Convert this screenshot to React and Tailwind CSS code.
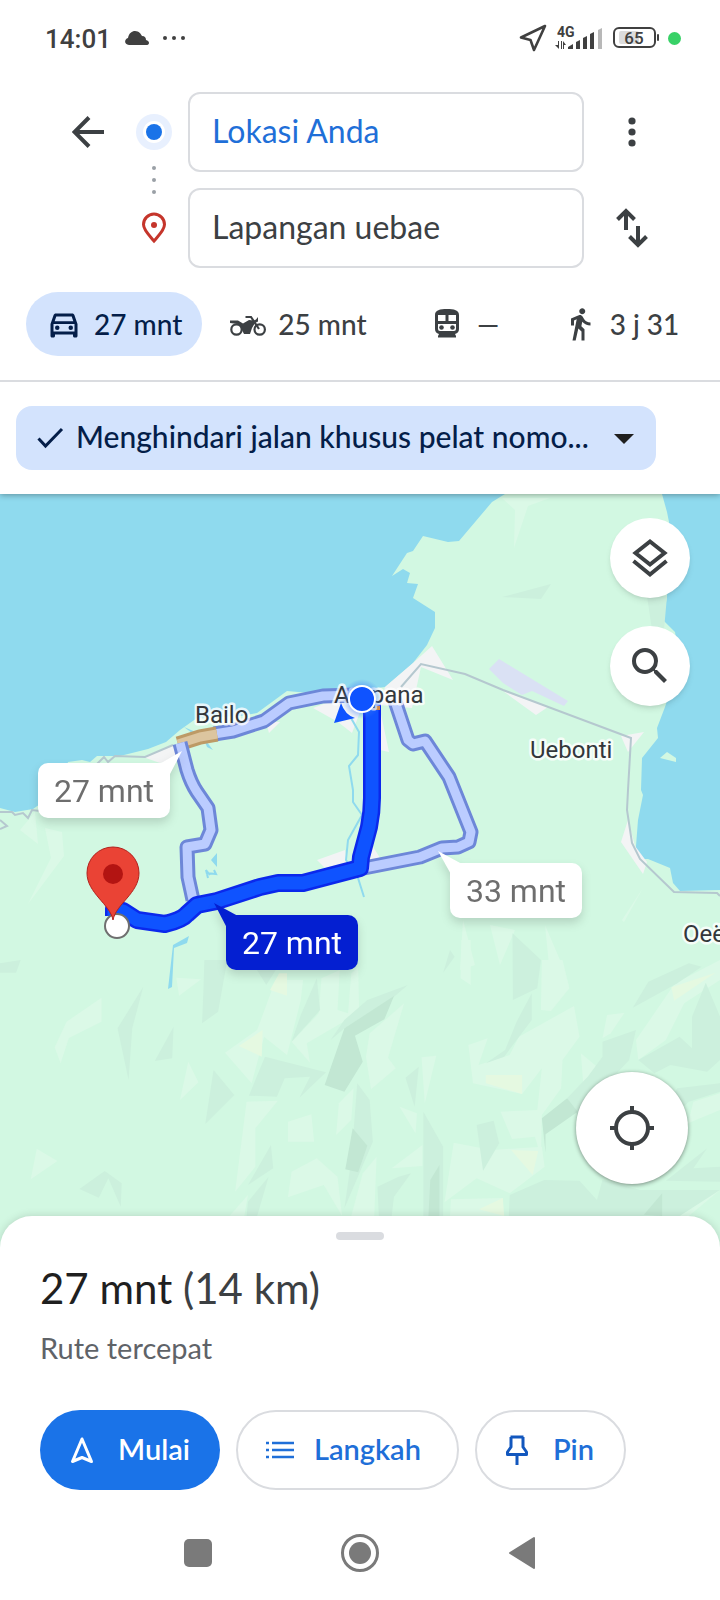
import { useState } from "react";
import {
  MdOutlineDirectionsCar,
  MdDirectionsWalk,
  MdSearch,
} from "react-icons/md";

const activeRoute =
  "M372 704 L372 798 Q372 812 369 827 L361 857 L360 868 L303 883 L278 883 L260 887 L217 901 L197 905 L187 914 Q182 920 165 924 L137 920 L123 911 L114 909 L114 916";
const northRoute = "M355 695 L323 696 L289 703 L264 721 L233 731 L214 734";
const slowSegment = "M217 734 L200 737 L178 744";
const westRoute =
  "M180 743 L187 770 Q191 783 197 792 L208 808 L211 830 L205 844 L187 847 L188 877 L193 900";
const eastRoute =
  "M394 698 L408 740 L413 744 L425 741 L449 777 L471 832 L469 842 L458 847 L442 848 L420 857 L364 868";

// Relief facets of the hills south of the coast road
const relief = {
  light: [
    "221,113 145,185 119,262 132,310 150,234 221,185",
    "410,305 432,367 392,420",
    "384,53 438,58 390,107",
    "80,566 125,603 67,658",
    "600,60 560,210 490,278 548,370 575,230 625,285 655,120 660,60",
    "700,55 694,160 635,245 675,308 668,250 755,180 782,150 780,20 765,40 758,160 735,150 740,30",
    "880,130 805,220 797,290 808,388 862,325 845,293",
    "537,425 605,422 556,505 556,620 512,695",
    "627,485 678,463 684,545 627,545",
    "770,385 765,480 732,525 738,430",
    "690,595 735,650 745,768 705,675 627,712 635,635",
    "820,590 815,768 765,768 790,640",
    "918,292 950,287 925,430",
    "870,440 908,460 905,520",
    "853,625 920,555 920,618",
    "1005,-60 1025,-60 1025,75 1003,55",
    "1180,0 1225,0 1240,85 1200,153 1178,150",
    "1250,138 1262,230 1225,300 1222,385 1180,465 1178,590 1165,530 1115,537 1090,455 1170,450 1180,325 1137,402 1030,370 1020,255 1062,235 1042,315 1110,285 1130,230",
    "988,548 1070,570 1180,560 1186,620 1110,700 1038,655 968,727",
    "982,718 1095,714 1095,768 980,768",
    "1322,165 1360,158 1330,220 1312,235",
    "1470,70 1568,0 1568,60 1490,130 1450,240 1390,300 1385,240 1425,160",
    "1265,280 1300,320 1270,370",
    "1568,400 1510,425 1498,490 1568,450",
    "1568,690 1500,768 1450,768 1520,700",
    "500,768 540,705 532,768",
  ],
  dark: [
    "0,10 45,0 35,38 0,38",
    "312,80 256,205 280,360 288,205",
    "378,200 337,303 375,295",
    "445,0 495,0 475,155 440,190 443,90",
    "465,330 510,405 447,492",
    "228,633 265,670 263,740 236,655 215,713 173,687",
    "555,20 605,20 580,75",
    "577,290 710,337 652,413 675,350 620,355 603,410 542,407",
    "690,55 697,150 635,245 655,165",
    "888,75 858,110 750,205 720,240 750,180 800,120",
    "778,370 805,420 812,545 750,745 765,600",
    "590,555 595,625 540,675",
    "585,650 560,768 537,768 540,725",
    "868,650 895,640 858,710 853,768 825,768 822,680",
    "912,320 903,440 883,353",
    "922,455 965,560 965,768 922,768",
    "1116,-80 1178,0 1170,85 1117,120",
    "1158,100 1158,180 1098,290 1058,310 1100,270 1125,185",
    "1038,495 1075,482 1087,550 1052,632",
    "1500,10 1528,20 1475,70 1378,143 1412,65",
    "1385,210 1370,300 1258,465 1235,415 1280,350 1312,290 1312,245",
    "1537,68 1568,170 1568,300 1540,335 1460,315 1425,340 1390,300 1480,230 1507,265 1507,170",
    "1110,705 1185,660 1262,662 1300,720 1312,660 1395,690 1568,690 1480,768 1108,768",
    "1475,385 1568,370 1568,395 1500,425 1460,480 1435,470",
    "1540,565 1510,625 1568,620 1568,665 1450,662",
    "980,-30 990,-10 965,38",
  ],
  deep: [
    "858,108 837,178 773,227 790,305 750,395 707,375 750,205",
    "768,505 800,557 780,637 752,628",
    "1235,415 1258,455 1188,523 1188,578 1180,475",
    "957,615 957,768 933,768 937,660",
    "1442,700 1442,768 1402,764",
  ],
  warm: [
    "608,40 625,40 625,107 588,90",
    "572,210 570,290 520,258",
    "1058,345 1137,345 1137,402 1058,370",
    "1113,570 1172,573 1160,645",
    "1095,714 1098,768 1043,748",
    "1558,38 1462,82 1468,122",
  ],
};

const reliefColors = { light: "#dbf9e7", dark: "#ccf0dd", deep: "#c2e7d3", warm: "#e5f9e1" };

function Route({ d, edge, fill, wide, inner }) {
  return (
    <g fill="none" strokeLinejoin="round">
      <path d={d} stroke={edge} strokeWidth={wide} />
      <path d={d} stroke={fill} strokeWidth={inner} />
    </g>
  );
}

function PlaceName({ x, y, children }) {
  return (
    <text
      x={x}
      y={y}
      fontSize="24"
      fill="#33373b"
      stroke="#ffffff"
      strokeOpacity="0.8"
      strokeWidth="5"
      strokeLinejoin="round"
      paintOrder="stroke"
    >
      {children}
    </text>
  );
}

function TimeBubble({ x, y, tail, text, active }) {
  return (
    <g filter="url(#bubbleShadow)">
      <path d={tail} fill={active ? "#041fd1" : "#ffffff"} />
      <rect x={x} y={y} width="132" height="55" rx="10" fill={active ? "#041fd1" : "#ffffff"} />
      <text x={x + 66} y={y + 39} textAnchor="middle" fontSize="32" fill={active ? "#ffffff" : "#6e6e6e"}>
        {text}
      </text>
    </g>
  );
}

function RouteMap() {
  return (
    <svg
      viewBox="0 494 720 754"
      preserveAspectRatio="xMidYMin slice"
      className="absolute inset-0 h-full w-full font-[Roboto,sans-serif]"
      role="img"
      aria-label="Peta rute"
    >
      <defs>
        <filter id="bubbleShadow" x="-20%" y="-20%" width="140%" height="160%" colorInterpolationFilters="sRGB">
          <feDropShadow dx="0" dy="5" stdDeviation="5" floodColor="#000" floodOpacity="0.14" />
        </filter>
        <radialGradient id="halo">
          <stop offset="0.6" stopColor="#3f7cf5" stopOpacity="0.5" />
          <stop offset="1" stopColor="#3f7cf5" stopOpacity="0" />
        </radialGradient>
      </defs>

      <rect y="494" width="720" height="754" fill="#8fdaee" />
      <path
        fill="#d2f8e2"
        d="M0 808 L15 812 L33 809 L60 790 L68 762 L82 760 L90 762 L97 756 L120 756 L148 749 L166 742 L180 730 L197 718 L240 716 L257 713 L287 691 L320 694 L345 692 L385 687 L413 663 L427 645 L435 628 L435 612 L413 598 L418 584 L407 583 L410 573 L403 569 L392 576 L407 553 L413 551 L423 536 L448 542 L459 541 L492 502 L505 494 L662 494 L667 512 L669 522 L667 597 L663 620 L675 632 L680 660 L665 707 L657 728 L658 738 L642 758 L641 790 L643 795 L638 820 L635 859 L648 859 L670 868 L673 883 L680 891 L720 890 L720 1248 L0 1248 Z"
      />
      <path fill="#d2f8e2" d="M660 758 L667 752 L676 758 L676 762 Z" />

      <path fill="#dbf9e7" d="M502 498 L550 498 L528 506 L514 548 L515 510 Z M20 830 L35 812 L38 844 Z M45 828 L62 832 L64 856 L28 904 L51 858 Z M643 888 L622 920 L624 922 Z" />
      <path fill="#ccf0dd" d="M502 597 L551 584 L541 599 Z M647 596 L667 596 L664 630 L652 630 Z" />
      <path fill="#dbf9e7" d="M463 920 L475 965 L460 970 Z M490 925 L515 930 L500 965 Z M545 925 L560 960 L550 975 Z" />

      <g transform="translate(0 960) scale(0.4592 0.3333)">
        {Object.entries(relief).map(([tone, shapes]) =>
          shapes.map((points) => <polygon key={points} points={points} fill={reliefColors[tone]} />)
        )}
      </g>

      {/* built-up areas */}
      <g fill="#f3f4f5">
        <path d="M432 646 L453 680 L421 667 L412 708 L380 705 L385 687 L413 663 Z" />
        <path d="M503 691 L536 715 L548 707 Z M621 736 L644 732 L628 752 Z" />
        <path d="M628 820 L621 842 L643 874 L647 862 L635 846 Z" />
        <path d="M143 757 L173 745 L180 760 L160 763 Z" />
        <path d="M317 860 L345 850 L347 862 L325 868 Z M378 700 L389 752 L380 750 Z M372 845 L380 858 L370 860 Z" />
        <path d="M313 708 L340 698 L360 712 L352 733 L338 722 Z M266 722 L280 722 L269 733 Z" />
      </g>
      <path fill="#dae1f4" d="M499 659 L489 669 L503 683 L522 695 L532 691 L564 706 L568 701 Z" />

      <g fill="none" stroke="#b5c8cf" strokeWidth="2">
        <path d="M401 687 L421 664 L465 674 L503 690 L631 738 L628 790 L627 810 L632 843 L640 859 L674 892 L717 893 L720 896" />
        <path d="M173 745 L145 757 L115 756 L108 762 L104 757 L97 764 M0 812 L12 812 L15 815 L23 813 L28 818 L32 810 L40 811 M0 820 L7 826 L0 829" />
      </g>

      <g fill="none" stroke="#8fdaee" strokeWidth="2">
        <path d="M351 718 L359 732 L358 755 L349 766 L353 790 L353 802 L362 815 L348 840 L346 860 L358 878 L364 897" />
        <path d="M210 875 L206 870 L208 878 M214 870 L216 874 L206 873" />
      </g>
      <path fill="#8fdaee" d="M217 853 L211 860 L217 867 Z M189 936 L173 945 L168 989 L172 987 L174 948 L187 943 Z M203 737 L213 750 L207 747 Z M184 727 L192 733 L198 733 Z" />

      <Route d={northRoute} edge="#6d87d8" fill="#bbccff" wide={15} inner={9} />
      <Route d={slowSegment} edge="#bd9a66" fill="#dcc59f" wide={15} inner={9} />
      <Route d={westRoute} edge="#6d87d8" fill="#bbccff" wide={15} inner={9} />
      <Route d={eastRoute} edge="#6d87d8" fill="#bbccff" wide={15} inner={9} />
      <Route d={activeRoute} edge="#0b28ec" fill="#0f53ff" wide={18} inner={13} />
      <path d="M372 708 L380 708" stroke="#e08a3c" strokeWidth="4" />

      <PlaceName x={195} y={723}>Bailo</PlaceName>
      <PlaceName x={334} y={703}>Ampana</PlaceName>
      <PlaceName x={530} y={758}>Uebonti</PlaceName>
      <PlaceName x={683} y={942}>Oeë</PlaceName>

      <path d="M341 703 Q345 715 355 718 L334 723 Z" fill="#0f53ff" />
      <circle cx="362" cy="699" r="20" fill="url(#halo)" />
      <circle cx="362" cy="699" r="13" fill="#0f53ff" stroke="#ffffff" strokeWidth="2" />

      <TimeBubble x={38} y={763} tail="M155 765 L163 762 L182 751 L170 774 L168 780 Z" text="27 mnt" />
      <TimeBubble x={450} y={863} tail="M438 851 L462 864 L452 876 Z" text="33 mnt" />
      <TimeBubble x={226} y={915} tail="M214 903 L238 916 L227 928 Z" text="27 mnt" active />

      <circle cx="117" cy="926" r="12" fill="#ffffff" stroke="#6f6f6f" strokeWidth="2" />
      <path
        d="M113 920 C110 904 87 893 87 873 A26 26 0 0 1 139 873 C139 893 116 904 113 920 Z"
        fill="#ea4335"
        stroke="#b3211d"
        strokeWidth="1"
      />
      <circle cx="113" cy="874" r="10" fill="#b31412" />
    </svg>
  );
}

function StatusBar() {
  return (
    <div className="flex h-[76px] items-center justify-between pr-[39px] pl-[45px] font-[Roboto,sans-serif] text-[#404040]">
      <div className="flex items-center gap-3.5">
        <span className="pt-0.5 text-[26px] leading-8 font-medium">14:01</span>
        <svg width="24" height="14" viewBox="0 0 24 14" fill="#404040">
          <path d="M4 14 C-1 14 -1 8 3 7 C4 2 7 0 10 0 C14 0 16 3 17 5 C20 5 21 7 21 9 C25 10 25 14 21 14 Z" />
        </svg>
        <svg width="24" height="6" viewBox="0 0 24 6" fill="#404040">
          <circle cx="2" cy="3" r="2" />
          <circle cx="11" cy="3" r="2" />
          <circle cx="20" cy="3" r="2" />
        </svg>
      </div>
      <div className="flex items-center gap-2">
        <svg width="28" height="28" viewBox="0 0 28 28" fill="none" stroke="#404040" strokeWidth="2.6" strokeLinejoin="round">
          <path d="M26 2 L2 13.500 L11.500 16 L15 26 Z" />
        </svg>
        <svg width="50" height="26" viewBox="0 0 50 26" fill="#404040">
          <text x="2" y="12" fontSize="14" fontWeight="700">4G</text>
          <path d="M4 16 V24 L0 20 H3 V16 Z M6 16 V24 H7 V16 Z M8 16 V24 H9 V20 H11 Z" />
          <path d="M13 24 V22 L18 19 V24 Z M21 24 V17 L25 15 V24 Z M28 24 V13 L32 11 V24 Z M35 24 V9 L39 7 V24 Z" />
          <path d="M43 24 V5 L47 3 V24 Z" fill="#b8b8b8" />
        </svg>
        <svg width="47" height="22" viewBox="0 0 47 22">
          <rect x="1" y="1" width="41" height="19" rx="5" fill="none" stroke="#404040" strokeWidth="2" />
          <rect x="6" y="4" width="20" height="13" rx="2" fill="#dcdcdc" />
          <rect x="44" y="7" width="2" height="7" rx="1" fill="#404040" />
          <text x="21" y="17" textAnchor="middle" fontSize="17" fontWeight="500" fill="#404040">65</text>
        </svg>
        <span className="size-[13px] rounded-full bg-[#38d167]" />
      </div>
    </div>
  );
}

function SearchForm() {
  const [origin, setOrigin] = useState("Lokasi Anda");
  const [destination, setDestination] = useState("Lapangan uebae");
  const field =
    "h-20 w-full min-w-0 rounded-xl border-2 border-[#dadce0] bg-white px-[22px] pb-1 text-[32px] outline-none";

  return (
    <form className="flex px-[72px] pt-4">
      <button type="button" aria-label="Kembali" className="mr-8 flex h-20 w-8 items-center">
        <svg width="32" height="32" viewBox="0 0 32 32" fill="none" stroke="#3c4043" strokeWidth="4">
          <path d="M32 16 H3 M17 1.500 L2.500 16 L17 30.500" />
        </svg>
      </button>
      <svg width="36" height="176" viewBox="0 0 36 176" className="mr-4 shrink-0">
        <circle cx="18" cy="40" r="18" fill="#e8f0fe" />
        <circle cx="18" cy="40" r="11" fill="#fff" />
        <circle cx="18" cy="40" r="8" fill="#1a73e8" />
        <g fill="#9aa0a6">
          <circle cx="18" cy="76" r="2" />
          <circle cx="18" cy="88" r="2" />
          <circle cx="18" cy="100" r="2" />
        </g>
        <path
          d="M18 149 C13 143 7.500 138 7.500 132.500 A10.500 10.500 0 0 1 28.500 132.500 C28.500 138 23 143 18 149 Z"
          fill="none"
          stroke="#c5352b"
          strokeWidth="3"
        />
        <circle cx="18" cy="133" r="3" fill="#c5352b" />
      </svg>
      <div className="flex min-w-0 flex-1 flex-col gap-4">
        <input
          aria-label="Titik awal"
          className={`${field} text-[#1f6fd8]`}
          value={origin}
          onChange={(e) => setOrigin(e.target.value)}
        />
        <input
          aria-label="Tujuan"
          className={`${field} text-[#3c4043]`}
          value={destination}
          onChange={(e) => setDestination(e.target.value)}
        />
      </div>
      <div className="ml-8 flex w-8 flex-col gap-4">
        <button type="button" aria-label="Opsi lainnya" className="flex h-20 items-center justify-center">
          <svg width="8" height="30" viewBox="0 0 8 30" fill="#3c4043">
            <circle cx="4" cy="4" r="3.600" />
            <circle cx="4" cy="15" r="3.600" />
            <circle cx="4" cy="26" r="3.600" />
          </svg>
        </button>
        <button type="button" aria-label="Tukar titik awal dan tujuan" className="flex h-20 items-center justify-center">
          <svg width="32" height="40" viewBox="0 0 32 40" fill="none" stroke="#3c4043" strokeWidth="4">
            <path d="M10 22 V3 M1.500 11.500 L10 3 L18.500 11.500 M22 18 V37 M13.500 28.500 L22 37 L30.500 28.500" />
          </svg>
        </button>
      </div>
    </form>
  );
}

function MotorcycleIcon() {
  return (
    <svg width="36" height="36" viewBox="0 0 36 36" fill="#3c4043">
      <g fill="none" stroke="#3c4043" strokeWidth="2.2">
        <circle cx="6.500" cy="23.500" r="5.200" />
        <circle cx="29.700" cy="23.500" r="5.200" />
        <path d="M15.500 11 H21 L29 23" />
      </g>
      <path d="M0 14.500 H8 L13 17.500 L19 14 L24 14.500 L26 13.500 L28 11 V15.500 L25 17 L22 22 L20 28 H14 L11 22 L8 18 L0 17 Z" />
    </svg>
  );
}

function TransitIcon() {
  return (
    <svg width="36" height="36" viewBox="0 0 36 36">
      <path
        fill="#3c4043"
        fillRule="evenodd"
        d="M6 9 C6 4 11 3 18 3 C25 3 30 4 30 9 V23 Q30 27 26 28 L27 30 V31.500 H9 V30 L10 28 Q6 27 6 23 Z M9 9 V15 H16.500 V9 Z M19.500 9 V15 H27 V9 Z M9 18 V23 Q9 25 11 25 H25 Q27 25 27 23 V18 Z"
      />
      <circle cx="12.500" cy="21.500" r="2.300" fill="#3c4043" />
      <circle cx="23.500" cy="21.500" r="2.300" fill="#3c4043" />
    </svg>
  );
}

const modes = [
  { id: "mobil", icon: <MdOutlineDirectionsCar className="size-9" />, label: "27 mnt" },
  { id: "motor", icon: <MotorcycleIcon />, label: "25 mnt" },
  { id: "transportasi umum", icon: <TransitIcon />, label: "—" },
  { id: "jalan kaki", icon: <MdDirectionsWalk className="size-9" />, label: "3 j 31" },
];

function TravelModes() {
  const [mode, setMode] = useState("mobil");
  return (
    <div className="mt-6 flex gap-2 overflow-hidden border-b-2 border-[#dadce0] pb-6 pl-[26px]">
      {modes.map((m) => (
        <button
          key={m.id}
          type="button"
          aria-label={`${m.id} ${m.label}`}
          aria-pressed={mode === m.id}
          onClick={() => setMode(m.id)}
          className={`flex h-16 min-w-[139px] shrink-0 items-center justify-center gap-3 rounded-full px-5 text-[28px] font-medium whitespace-nowrap ${
            mode === m.id ? "bg-[#d3e3fd] text-[#041e49]" : "text-[#3c4043]"
          }`}
        >
          {m.icon}
          <span>{m.label}</span>
        </button>
      ))}
    </div>
  );
}

function AvoidChip() {
  return (
    <div className="py-6 pr-16 pl-4">
      <label className="flex h-16 items-center gap-2 rounded-2xl bg-[#d3e3fd] pr-3.5 pl-4">
        <svg width="36" height="36" viewBox="0 0 36 36" fill="none" stroke="#041e49" strokeWidth="3" className="shrink-0">
          <path d="M6.500 18.500 L13.500 26 L30 9" />
        </svg>
        <select
          aria-label="Opsi pelat nomor"
          className="min-w-0 flex-1 appearance-none bg-transparent pb-1 text-[30px] font-medium text-[#041e49] outline-none"
        >
          <option>Menghindari jalan khusus pelat nomo...</option>
        </select>
        <svg width="36" height="36" viewBox="0 0 36 36" fill="#1f1f1f" className="shrink-0">
          <path d="M8 14 H28 L18 24 Z" />
        </svg>
      </label>
    </div>
  );
}

function MapArea() {
  const round = "flex items-center justify-center rounded-full bg-white text-[#3c4043]";
  return (
    <section className="relative min-h-[480px] flex-1 overflow-hidden">
      <RouteMap />
      <div className="absolute top-6 right-[30px] flex flex-col gap-7">
        <button type="button" aria-label="Lapisan" className={`${round} size-20 shadow-md`}>
          <svg width="36" height="40" viewBox="0 0 36 40" fill="none" stroke="#3c4043" strokeWidth="4">
            <path d="M18 3.500 L32.500 15 L18 26.500 L3.500 15 Z M1.500 23 L18 36.500 L34.500 23" />
          </svg>
        </button>
        <button type="button" aria-label="Telusuri" className={`${round} size-20 shadow-md`}>
          <MdSearch className="size-12" />
        </button>
      </div>
      <button type="button" aria-label="Lokasi saya" className={`${round} absolute right-8 bottom-16 size-28 shadow-[0_1px_4px_rgba(0,0,0,0.45)]`}>
        <svg width="44" height="44" viewBox="0 0 44 44" fill="none" stroke="#3c4043" strokeWidth="4">
          <circle cx="22" cy="22" r="16" />
          <path d="M22 0 V6 M22 38 V44 M0 22 H6 M38 22 H44" />
        </svg>
      </button>
    </section>
  );
}

function RouteSheet() {
  const outlined = "flex h-20 items-center rounded-full border-2 border-[#dadce0] text-[#1f6fd8]";
  return (
    <section className="relative -mt-8 rounded-t-[32px] bg-white pt-4 shadow-[0_0_8px_rgba(0,0,0,0.15)]">
      <div className="mx-auto h-2 w-12 rounded-full bg-[#dadce0]" />
      <div className="px-10">
        <h1 className="mt-5 text-[42px] leading-[56px] text-[#1f1f1f]">
          27 mnt <span className="text-[#3c4043]">(14 km)</span>
        </h1>
        <p className="mt-3 text-[29px] leading-10 text-[#5f6368]">Rute tercepat</p>
        <div className="mt-[42px] flex gap-4 text-[29px] font-semibold">
          <button type="button" className="flex h-20 items-center gap-6 rounded-full bg-[#1a73e8] px-[30px] text-white">
            <svg width="24" height="30" viewBox="0 0 24 30" fill="none" stroke="currentColor" strokeWidth="3" strokeLinejoin="round">
              <path d="M12 4 L21.500 26.500 L12 22.500 L2.500 26.500 Z" />
            </svg>
            <span className="pb-0.5">Mulai</span>
          </button>
          <button type="button" className={`${outlined} gap-5 pr-9 pl-7`}>
            <svg width="28" height="18" viewBox="0 0 28 18" fill="none" stroke="currentColor" strokeWidth="2.6">
              <path d="M0 2 H3 M6 2 H28 M0 9 H3 M6 9 H28 M0 16 H3 M6 16 H28" />
            </svg>
            <span className="pb-0.5">Langkah</span>
          </button>
          <button type="button" className={`${outlined} gap-6 pr-[30px] pl-7`}>
            <svg width="24" height="32" viewBox="0 0 24 32" fill="none" stroke="#1257be" strokeWidth="3" strokeLinejoin="round">
              <path d="M5.500 3 H18.500 M6 3 V13 L2.500 18 V20.500 H21.500 V18 L18 13 V3 M12 20 V31" />
            </svg>
            <span className="pb-0.5">Pin</span>
          </button>
        </div>
      </div>
      <nav aria-label="Navigasi sistem" className="mt-4 flex h-[94px] items-center justify-center gap-[122px]">
        <button type="button" aria-label="Terbaru" className="flex w-10 justify-center">
          <span className="size-7 rounded-[5px] bg-[#7a7a7a]" />
        </button>
        <button type="button" aria-label="Beranda" className="flex w-10 justify-center">
          <svg width="40" height="40" viewBox="0 0 40 40">
            <circle cx="20" cy="20" r="17.500" fill="none" stroke="#7a7a7a" strokeWidth="3" />
            <circle cx="20" cy="20" r="11" fill="#7a7a7a" />
          </svg>
        </button>
        <button type="button" aria-label="Kembali ke aplikasi" className="flex w-10 justify-center">
          <svg width="28" height="34" viewBox="0 0 28 34" fill="#7a7a7a" stroke="#7a7a7a" strokeWidth="2" strokeLinejoin="round">
            <path d="M26 2 V32 L2 17 Z" />
          </svg>
        </button>
      </nav>
    </section>
  );
}

export default function App() {
  return (
    <main className="flex min-h-screen flex-col bg-white font-[Lato,sans-serif]">
      <header className="relative z-10 bg-white shadow-[0_1px_6px_rgba(0,0,0,0.35)]">
        <StatusBar />
        <SearchForm />
        <TravelModes />
        <AvoidChip />
      </header>
      <MapArea />
      <RouteSheet />
    </main>
  );
}
